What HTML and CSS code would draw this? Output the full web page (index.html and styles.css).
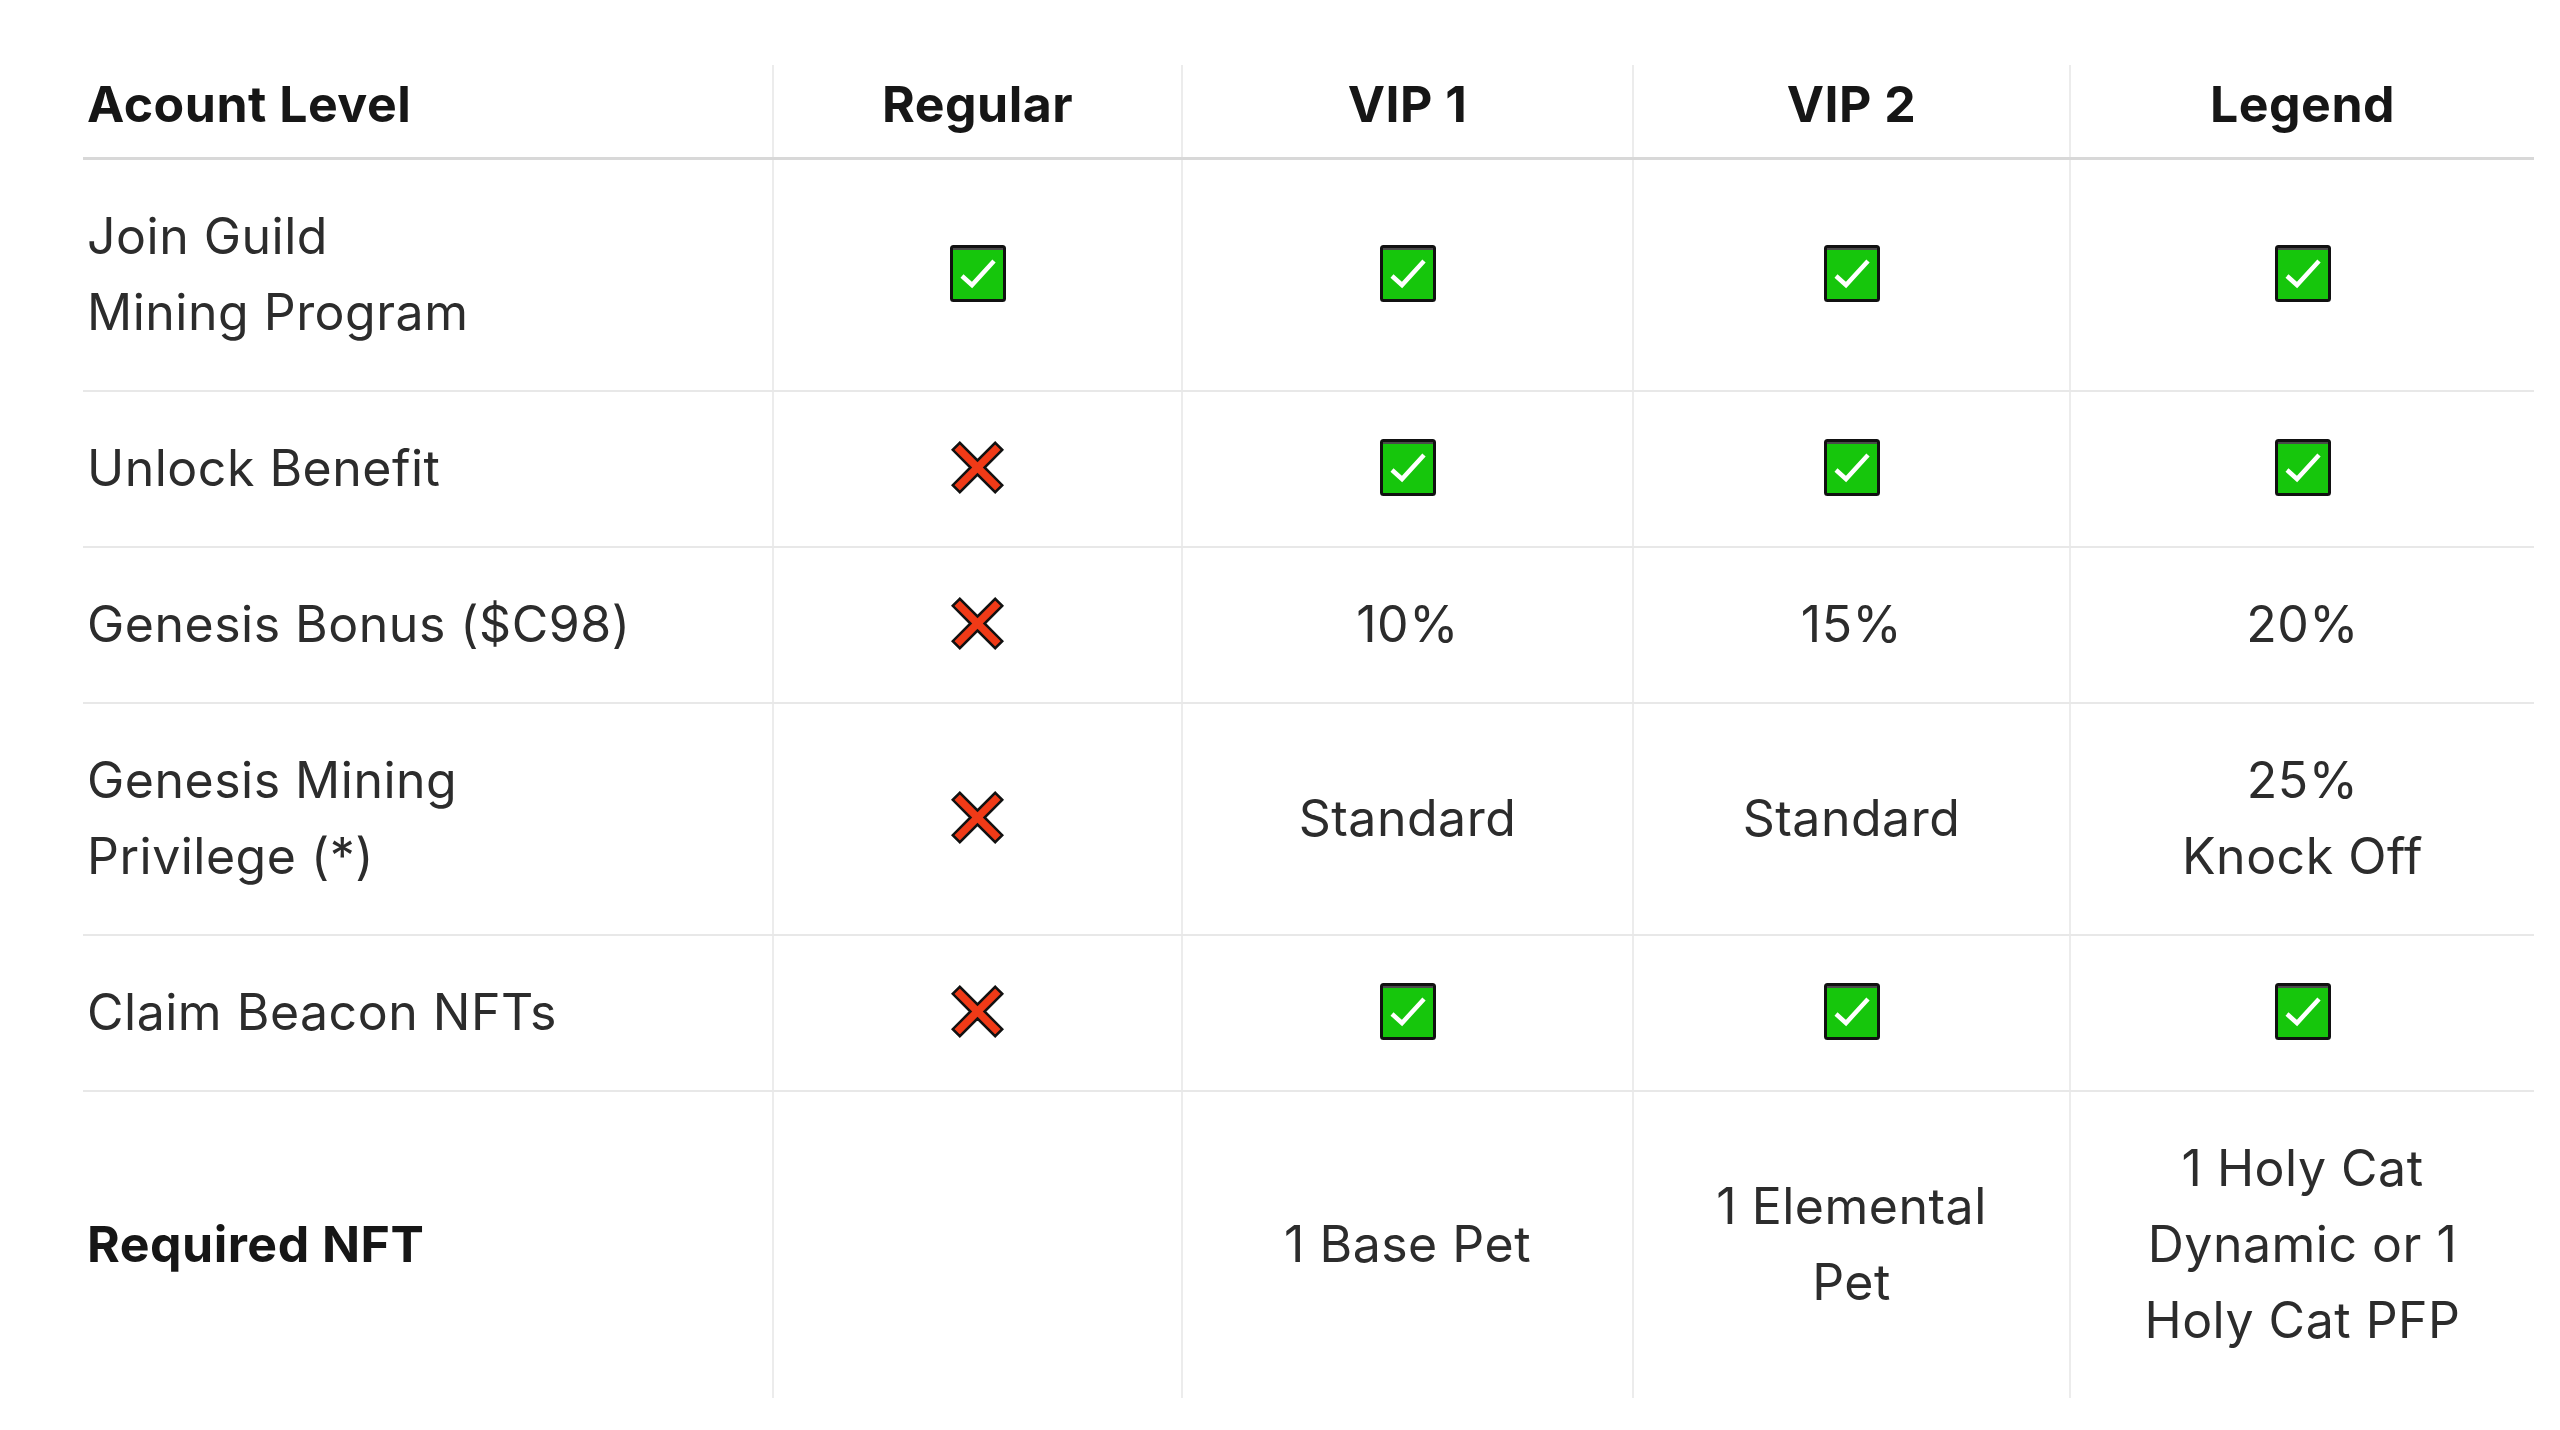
FILE: index.html
```html
<!DOCTYPE html>
<html lang="en">
<head>
<meta charset="utf-8">
<title>Account Levels</title>
<link rel="stylesheet" href="styles.css">
</head>
<body>
<svg width="0" height="0" class="defs" aria-hidden="true">
  <defs>
    <symbol id="yes" viewBox="0 0 56 57">
      <rect x="1.5" y="1.5" width="53" height="54" rx="2" fill="#16c60c" stroke="#111" stroke-width="3"/>
      <rect x="3" y="3" width="50" height="2" fill="#4a4a4a"/>
      <polyline points="12,31 22,40 44,16" fill="none" stroke="#fff" stroke-width="4.5" stroke-linejoin="miter" stroke-linecap="butt"/>
    </symbol>
    <symbol id="no" viewBox="0 0 53 53">
      <g transform="translate(26.5 26.5) rotate(45)">
        <path d="M5 -30 L5 -5 L30 -5 L30 5 L5 5 L5 30 L-5 30 L-5 5 L-30 5 L-30 -5 L-5 -5 L-5 -30 Z" fill="#f03a17" stroke="#111" stroke-width="2.5" stroke-linejoin="miter"/>
      </g>
    </symbol>
  </defs>
</svg>
<div class="page">
  <table class="levels">
    <colgroup>
      <col class="c-label">
      <col class="c-regular">
      <col class="c-vip1">
      <col class="c-vip2">
      <col class="c-legend">
    </colgroup>
    <thead>
      <tr>
        <th class="label">Acount Level</th>
        <th>Regular</th>
        <th>VIP 1</th>
        <th>VIP 2</th>
        <th>Legend</th>
      </tr>
    </thead>
    <tbody>
      <tr>
        <td class="label">Join Guild<br>Mining Program</td>
        <td><svg class="icon yes"><use href="#yes"/></svg></td>
        <td><svg class="icon yes"><use href="#yes"/></svg></td>
        <td><svg class="icon yes"><use href="#yes"/></svg></td>
        <td><svg class="icon yes"><use href="#yes"/></svg></td>
      </tr>
      <tr>
        <td class="label">Unlock Benefit</td>
        <td><svg class="icon no"><use href="#no"/></svg></td>
        <td><svg class="icon yes"><use href="#yes"/></svg></td>
        <td><svg class="icon yes"><use href="#yes"/></svg></td>
        <td><svg class="icon yes"><use href="#yes"/></svg></td>
      </tr>
      <tr>
        <td class="label">Genesis Bonus ($C98)</td>
        <td><svg class="icon no"><use href="#no"/></svg></td>
        <td>10%</td>
        <td>15%</td>
        <td>20%</td>
      </tr>
      <tr>
        <td class="label">Genesis Mining<br>Privilege (*)</td>
        <td><svg class="icon no"><use href="#no"/></svg></td>
        <td>Standard</td>
        <td>Standard</td>
        <td>25%<br>Knock Off</td>
      </tr>
      <tr>
        <td class="label">Claim Beacon NFTs</td>
        <td><svg class="icon no"><use href="#no"/></svg></td>
        <td><svg class="icon yes"><use href="#yes"/></svg></td>
        <td><svg class="icon yes"><use href="#yes"/></svg></td>
        <td><svg class="icon yes"><use href="#yes"/></svg></td>
      </tr>
      <tr class="last">
        <td class="label strong">Required NFT</td>
        <td></td>
        <td>1 Base Pet</td>
        <td>1 Elemental<br>Pet</td>
        <td>1 Holy Cat<br>Dynamic or 1<br>Holy Cat PFP</td>
      </tr>
    </tbody>
  </table>
</div>
</body>
</html>
```

FILE: styles.css
```css
html, body {
  margin: 0;
  padding: 0;
  background: #ffffff;
}

body {
  font-family: "Inter", "Noto Sans", "Liberation Sans", sans-serif;
  color: #2c2c2c;
}

.defs {
  position: absolute;
  width: 0;
  height: 0;
  overflow: hidden;
}

.page {
  padding: 65px 26px 0 83px;
}

.levels {
  border-collapse: collapse;
  table-layout: fixed;
  width: 2451px;
  font-size: 50px;
  letter-spacing: 0.5px;
  line-height: 76px;
}

.c-label { width: 690px; }
.c-regular { width: 409px; }
.c-vip1 { width: 451px; }
.c-vip2 { width: 437px; }
.c-legend { width: 464px; }

.levels th {
  font-weight: 700;
  color: #161616;
  text-align: center;
  vertical-align: middle;
  padding: 1px 4px 15px;
  border-bottom: 3px solid #d8d8d8;
}

.levels td {
  text-align: center;
  vertical-align: middle;
  padding: 37.5px 4px 40.5px;
  border-bottom: 2px solid #e8e8e8;
}

.levels th + th,
.levels td + td {
  border-left: 2px solid #ececec;
}

.levels .label {
  text-align: left;
}

.levels .strong {
  font-weight: 700;
  color: #161616;
}

.levels tr.last td {
  border-bottom: none;
}

.icon {
  display: block;
  margin: 0 auto;
}

.icon.yes {
  width: 56px;
  height: 57px;
}

.icon.no {
  width: 53px;
  height: 53px;
}
```
